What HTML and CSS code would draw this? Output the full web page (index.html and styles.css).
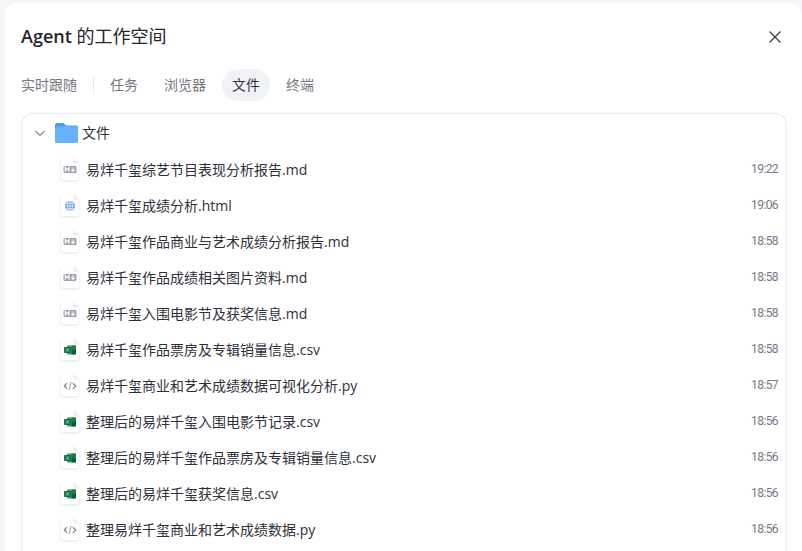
FILE: index.html
```html
<!DOCTYPE html>
<html lang="zh">
<head>
<meta charset="utf-8">
<title>Agent 的工作空间</title>
<link rel="stylesheet" href="styles.css">
</head>
<body>
<svg class="defs" width="0" height="0" aria-hidden="true">
  <defs>
    <symbol id="doc" viewBox="0 0 18 22">
      <path d="M2 0H12.500L18 5.500V20a2 2 0 0 1-2 2H2a2 2 0 0 1-2-2V2a2 2 0 0 1 2-2Z" fill="#fff"/>
      <path d="M12.500 0V4a1.500 1.500 0 0 0 1.500 1.500H18Z" fill="#eeeef2"/>
    </symbol>
    <symbol id="md" viewBox="0 0 18 22">
      <use href="#doc"/>
      <rect x="2.500" y="8" width="13" height="7" rx="1" fill="#a3a3ad"/>
      <path d="M4.300 13.800V9.400L6.200 11.800 8.100 9.400V13.800" fill="none" stroke="#fff" stroke-width="1.100"/>
      <path d="M12 9.200V13M10.300 11.500l1.700 2 1.700-2" fill="none" stroke="#fff" stroke-width="1.100"/>
    </symbol>
    <symbol id="html" viewBox="0 0 18 22">
      <use href="#doc"/>
      <circle cx="9" cy="12" r="5" fill="#5f93f7"/>
      <path d="M4 12H14M9 7V17M5 9.300H13M5 14.700H13" stroke="#fff" stroke-width=".7" fill="none"/>
      <ellipse cx="9" cy="12" rx="2.400" ry="5" fill="none" stroke="#fff" stroke-width=".7"/>
    </symbol>
    <symbol id="csv" viewBox="0 0 18 22">
      <use href="#doc"/>
      <rect x="6" y="7.500" width="9" height="9" rx="1" fill="#2c9c63"/>
      <rect x="10.500" y="7.500" width="4.500" height="4.500" fill="#1d7a48"/>
      <rect x="10.500" y="12" width="4.500" height="4.500" fill="#125c38"/>
      <rect x="3" y="9" width="7" height="6" rx=".8" fill="#14754a"/>
      <path d="M5.300 10.500 7.700 13.500M7.700 10.500 5.300 13.500" stroke="#cfe8da" stroke-width=".7"/>
    </symbol>
    <symbol id="py" viewBox="0 0 18 22">
      <use href="#doc"/>
      <path d="M6 9.300 3.300 12l2.700 2.700M12 9.300l2.700 2.700L12 14.700" fill="none" stroke="#85858f" stroke-width="1.300"/>
      <path d="M10 8 8 16" fill="none" stroke="#b0b0b8" stroke-width="1.300"/>
    </symbol>
  </defs>
</svg>
<main class="panel">
  <header class="head">
    <h1 class="title"><span class="title-en">Agent</span> 的工作空间</h1>
    <button class="close" aria-label="关闭">
      <svg width="14" height="14" viewBox="0 0 14 14"><path d="M1.500 1.500 12.500 12.500M12.500 1.500 1.500 12.500" stroke="#3c3c4a" stroke-width="1.300" fill="none"/></svg>
    </button>
  </header>
  <nav class="tabs">
    <span class="tab tab-first">实时跟随</span>
    <span class="sep"></span>
    <span class="tab">任务</span>
    <span class="tab">浏览器</span>
    <span class="tab tab-active">文件</span>
    <span class="tab">终端</span>
  </nav>
  <section class="card">
    <div class="root">
      <svg class="chev" width="12" height="12" viewBox="0 0 12 12"><path d="M1.500 4 6 8.500 10.500 4" fill="none" stroke="#8a8a96" stroke-width="1.100"/></svg>
      <svg class="folder" width="23" height="20" viewBox="0 0 23 20"><path d="M2 0H8.500L11 2.500H21a2 2 0 0 1 2 2V18a2 2 0 0 1-2 2H2a2 2 0 0 1-2-2V2a2 2 0 0 1 2-2Z" fill="#4f9df0"/><path d="M1.500 3.500H21a2 2 0 0 1 2 2V18a2 2 0 0 1-2 2H2a2 2 0 0 1-2-2V5a1.500 1.500 0 0 1 1.500-1.500Z" fill="#66b2ff"/></svg>
      <span class="root-name">文件</span>
    </div>
    <ul class="files">
      <li class="file"><svg class="ficon"><use href="#md"/></svg><span class="fname">易烊千玺综艺节目表现分析报告.md</span><time class="ftime">19:22</time></li>
      <li class="file"><svg class="ficon"><use href="#html"/></svg><span class="fname">易烊千玺成绩分析.html</span><time class="ftime">19:06</time></li>
      <li class="file"><svg class="ficon"><use href="#md"/></svg><span class="fname">易烊千玺作品商业与艺术成绩分析报告.md</span><time class="ftime">18:58</time></li>
      <li class="file"><svg class="ficon"><use href="#md"/></svg><span class="fname">易烊千玺作品成绩相关图片资料.md</span><time class="ftime">18:58</time></li>
      <li class="file"><svg class="ficon"><use href="#md"/></svg><span class="fname">易烊千玺入围电影节及获奖信息.md</span><time class="ftime">18:58</time></li>
      <li class="file"><svg class="ficon"><use href="#csv"/></svg><span class="fname">易烊千玺作品票房及专辑销量信息.csv</span><time class="ftime">18:58</time></li>
      <li class="file"><svg class="ficon"><use href="#py"/></svg><span class="fname">易烊千玺商业和艺术成绩数据可视化分析.py</span><time class="ftime">18:57</time></li>
      <li class="file"><svg class="ficon"><use href="#csv"/></svg><span class="fname">整理后的易烊千玺入围电影节记录.csv</span><time class="ftime">18:56</time></li>
      <li class="file"><svg class="ficon"><use href="#csv"/></svg><span class="fname">整理后的易烊千玺作品票房及专辑销量信息.csv</span><time class="ftime">18:56</time></li>
      <li class="file"><svg class="ficon"><use href="#csv"/></svg><span class="fname">整理后的易烊千玺获奖信息.csv</span><time class="ftime">18:56</time></li>
      <li class="file"><svg class="ficon"><use href="#py"/></svg><span class="fname">整理易烊千玺商业和艺术成绩数据.py</span><time class="ftime">18:56</time></li>
    </ul>
  </section>
</main>
</body>
</html>
```

FILE: styles.css
```css
* { box-sizing: border-box; }
html, body { margin: 0; height: 100%; overflow: hidden; }
body {
  background: #f6f6fa;
  padding: 3px 0 0 5px;
  font-family: "Open Sans", "Noto Sans CJK SC", sans-serif;
  color: #2f2f3c;
}
.defs { display: block; height: 0; }
.panel {
  background: #fff;
  border-radius: 12px 12px 0 0;
  height: 100%;
  padding: 0 15px 0 16px;
  overflow: hidden;
}
.head {
  display: flex;
  align-items: center;
  justify-content: space-between;
  height: 34px;
  margin-top: 17px;
}
.title { margin: 0 0 2px; font-size: 18px; font-weight: 400; line-height: 32px; color: #25252f; }
.title-en { font-weight: 600; }
.close { border: 0; background: none; padding: 0; width: 14px; height: 14px; display: flex; margin-right: 5px; }
.tabs { display: flex; align-items: center; height: 32px; margin-top: 15px; font-size: 14px; color: #77777f; }
.tab { padding: 0 10px; height: 32px; line-height: 32px; border-radius: 16px; margin-right: 6px; white-space: nowrap; }
.tab-first { padding: 0; margin-right: 16px; }
.tab-active { background: #f1f2f7; color: #34343f; }
.sep { width: 1px; height: 17px; background: #e8e8ed; margin-right: 6px; }
.card {
  margin-top: 12px;
  border: 1px solid #ebebf0;
  border-bottom: 0;
  border-radius: 12px 12px 0 0;
  height: 500px;
}
.root { display: flex; align-items: center; height: 37px; padding-left: 12px; font-size: 14px; }
.chev { margin-right: 9px; }
.folder { margin-right: 4px; }
.root-name { color: #2f2f3a; margin-bottom: 2px; }
.files { list-style: none; margin: 0; padding: 0; }
.file { display: flex; align-items: center; height: 36px; padding: 0 8px 0 39px; }
.ficon { width: 18px; height: 22px; flex: none; margin-right: 7px; filter: drop-shadow(0 1px 1.5px rgba(40, 40, 70, .14)); }
.fname { flex: 1; font-size: 14px; color: #2f2f3a; white-space: nowrap; }
.ftime { font-family: "Roboto", sans-serif; font-size: 12px; letter-spacing: -.6px; color: #767688; }
```
